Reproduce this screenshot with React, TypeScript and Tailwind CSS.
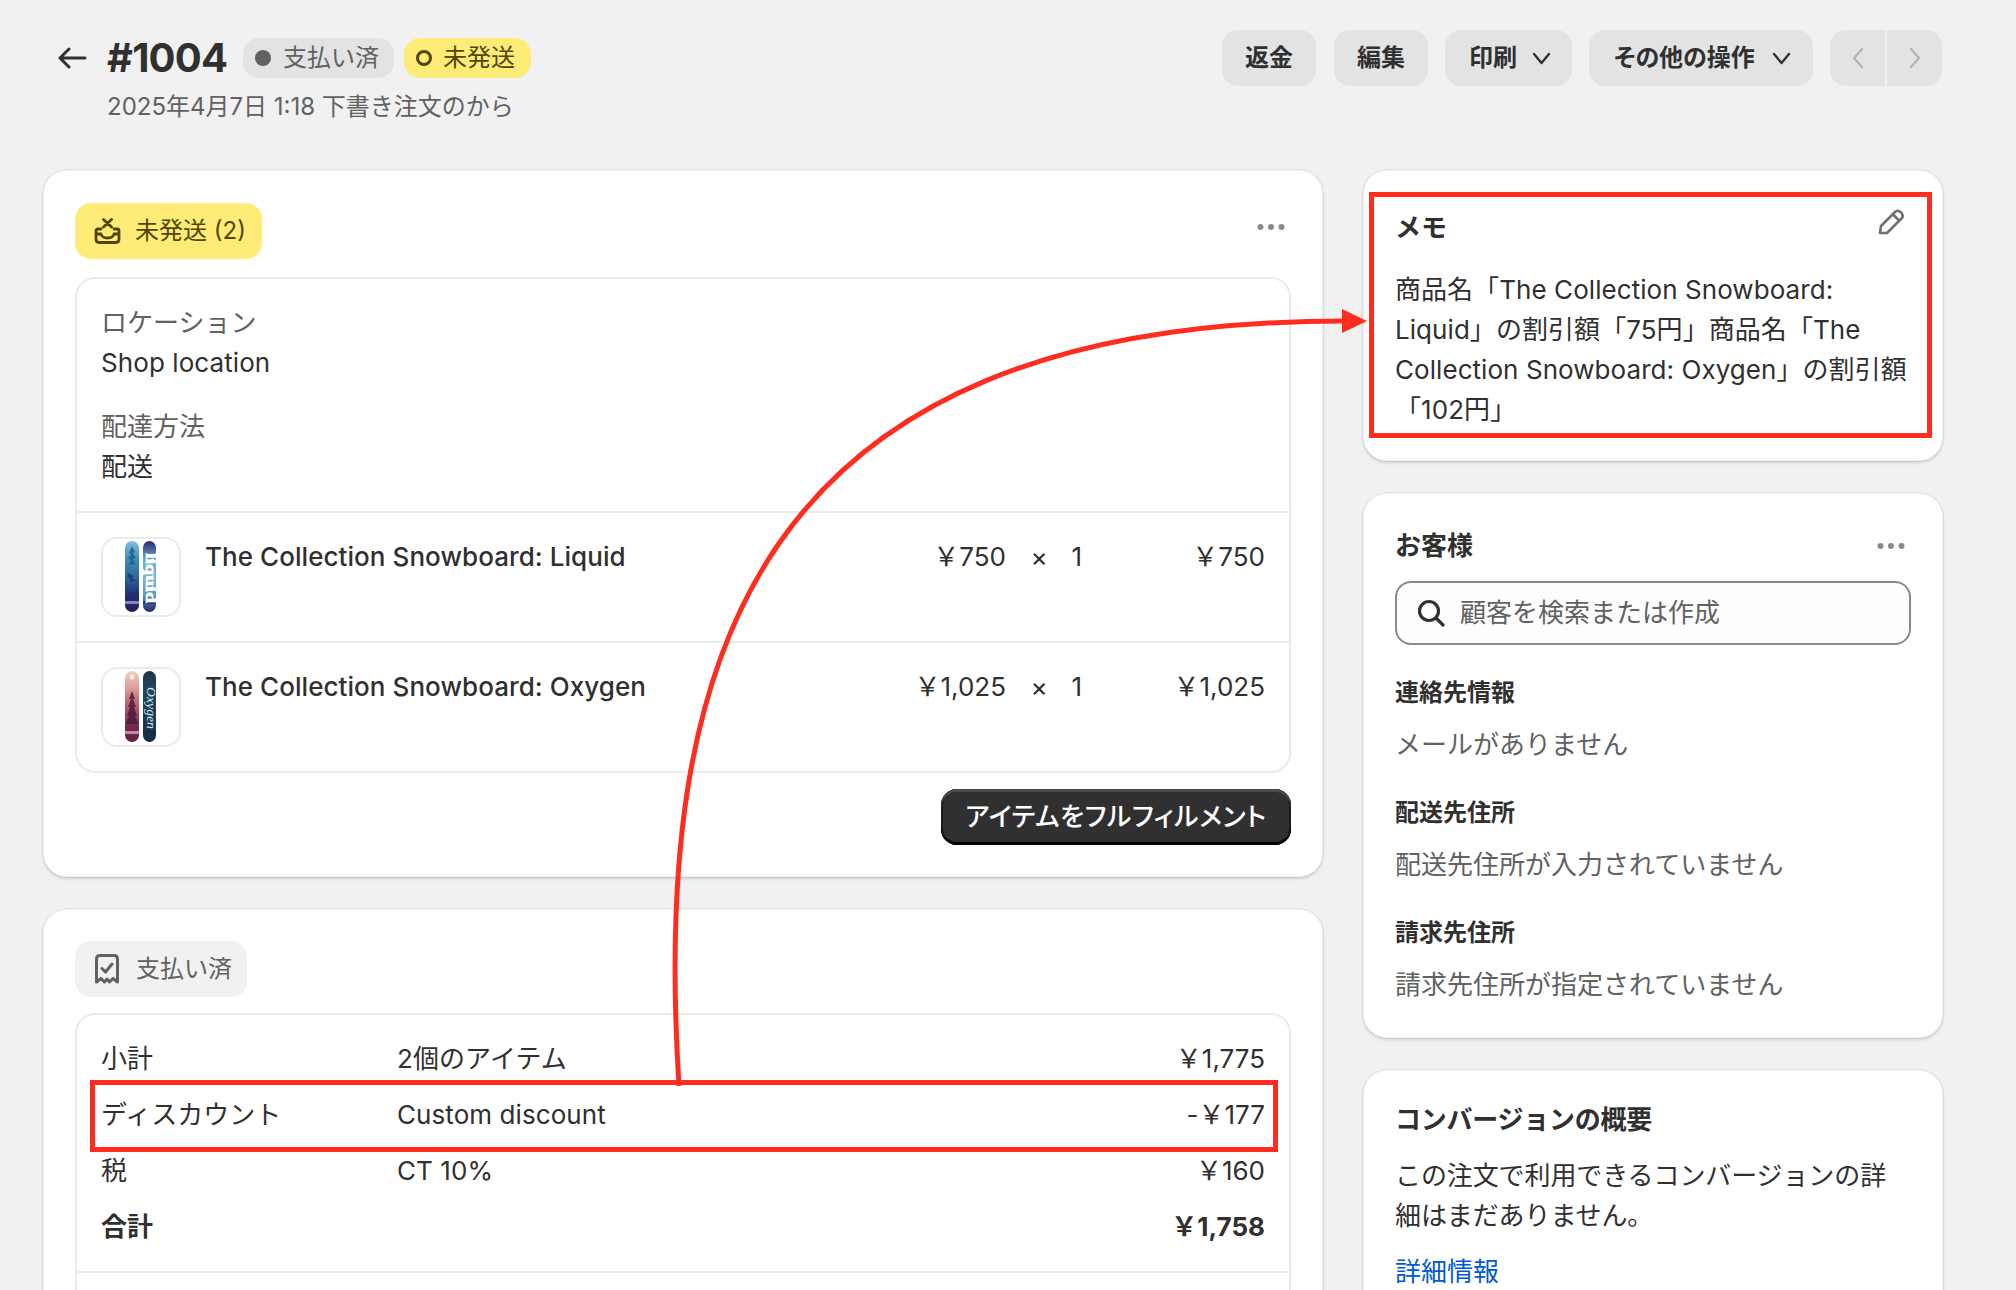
import type { ReactNode } from "react";

const RED = "#ff2d20";
const YEN = "\uFFE5";

function Chevron({ dir = "down", color = "#303030" }: { dir?: "down" | "left" | "right"; color?: string }) {
  const d = dir === "down" ? "M2 2l7.5 9L17 2" : dir === "left" ? "M11 2L3 11l8 9" : "M3 2l8 9-8 9";
  const size = dir === "down" ? "h-[13px] w-[19px]" : "h-[22px] w-[14px]";
  return (
    <svg className={size} viewBox={dir === "down" ? "0 0 19 13" : "0 0 14 22"} fill="none" stroke={color} strokeWidth="2.4" strokeLinecap="round" strokeLinejoin="round">
      <path d={d} />
    </svg>
  );
}

function Dots() {
  return (
    <svg className="h-[8px] w-[28px]" viewBox="0 0 28 8" fill="#8a8a8a">
      <circle cx="3.5" cy="4" r="3" />
      <circle cx="14" cy="4" r="3" />
      <circle cx="24.5" cy="4" r="3" />
    </svg>
  );
}

function HeaderButton({ children, className }: { children: ReactNode; className: string }) {
  return (
    <button type="button" className={`flex h-[56px] items-center rounded-[16px] bg-[#e3e3e3] text-[24px] font-semibold text-[#303030] [font-feature-settings:'palt'] ${className}`}>
      {children}
    </button>
  );
}

function Board({ id, x, w, stops, band, children }: { id: string; x: number; w: number; stops: string[]; band: string; children?: ReactNode }) {
  return (
    <g>
      <defs>
        <linearGradient id={`${id}-g`} x1="0" y1="0" x2="0" y2="1">
          {stops.map((s, i) => (
            <stop key={s} offset={i / (stops.length - 1)} stopColor={s} />
          ))}
        </linearGradient>
        <clipPath id={`${id}-c`}>
          <rect x={x} y="4" width={w} height="71" rx={w / 2} />
        </clipPath>
      </defs>
      <g clipPath={`url(#${id}-c)`}>
        <rect x={x} y="4" width={w} height="71" fill={`url(#${id}-g)`} />
        <rect x={x} y="64" width={w} height="3" fill={band} opacity="0.75" />
        {children}
      </g>
    </g>
  );
}

function LiquidThumb() {
  return (
    <svg className="h-[76px] w-[76px]" viewBox="2 2 76 76">
      <Board id="lq1" x={24} w={14} stops={["#86c0da", "#3d8fb8", "#2b6a9e", "#252d78", "#1f1d5c"]} band="#a8a8c0">
        <path d="M31 9l3 6-2 1 3 5-3 1 2 5-6 1 2-5-3-1 3-5-2-1z" fill="#1d5a86" opacity="0.8" />
        <path d="M27 36l6 3-2 2 4 3-7 1 2-3-4-2z" fill="#1c3f78" />
      </Board>
      <Board id="lq2" x={42} w={13} stops={["#26296a", "#6aa9cc", "#7db8d4", "#5c9ac2", "#26296a"]} band="#26296a">
        <text x="0" y="0" transform="translate(45 16) rotate(90)" fontFamily="Liberation Serif" fontWeight="700" fontSize="15" fill="#ffffff" stroke="#ffffff" strokeWidth="0.6" textLength="50" lengthAdjust="spacingAndGlyphs">
          liquid
        </text>
      </Board>
    </svg>
  );
}

function OxygenThumb() {
  return (
    <svg className="h-[76px] w-[76px]" viewBox="2 2 76 76">
      <Board id="ox1" x={24} w={14} stops={["#ecd0c8", "#dc9a98", "#b85a68", "#7c2a50", "#63203f"]} band="#c8b4bc">
        <path d="M31 24l3 8-2 0 3 8-2 0 3 9-2 0 3 8H25l3-8-2 0 3-9-2 0 3-8-2 0z" fill="#4a1c3a" opacity="0.85" />
        <circle cx="31" cy="10" r="2.4" fill="#fbeee8" />
      </Board>
      <Board id="ox2" x={42} w={13} stops={["#1b3348", "#24465f", "#1d3e56", "#1a3850", "#142c42"]} band="#1a2c3e">
        <text x="0" y="0" transform="translate(46 20) rotate(90)" fontFamily="Liberation Serif" fontStyle="italic" fontSize="13" fill="#dcecf0" textLength="42" lengthAdjust="spacingAndGlyphs">
          Oxygen
        </text>
      </Board>
    </svg>
  );
}

function ProductRow({ name, price, thumb }: { name: string; price: string; thumb: ReactNode }) {
  return (
    <div className="flex h-[130px] border-t-2 border-[#ebebeb] px-[24px] py-[24px]">
      <div className="flex h-[80px] w-[80px] shrink-0 items-center justify-center rounded-[16px] border-2 border-[#ebebeb] bg-white">{thumb}</div>
      <div className="ml-[24px] flex-1 font-medium tracking-[0.06px] whitespace-nowrap">{name}</div>
      <div className="w-[160px] text-right">{price}</div>
      <div className="ml-[10px] w-[46px] text-center">×</div>
      <div className="w-[20px] text-right">1</div>
      <div className="w-[183px] text-right">{price}</div>
    </div>
  );
}

function SummaryRow({ label, detail, value, bold }: { label: string; detail?: string; value: string; bold?: boolean }) {
  return (
    <div className={`flex ${bold ? "font-bold" : ""}`}>
      <div className="w-[296px]">{label}</div>
      <div className="flex-1 tracking-[0.08px]">{detail}</div>
      <div>{value}</div>
    </div>
  );
}

function Card({ className = "", children }: { className?: string; children: ReactNode }) {
  return (
    <section className={`rounded-[24px] bg-white shadow-[0_2px_3px_rgba(26,26,26,0.14),0_0_0_1px_rgba(26,26,26,0.06),inset_0_0_0_1px_rgba(26,26,26,0.06)] ${className}`}>{children}</section>
  );
}

function AddressBlock({ title, body }: { title: string; body: string }) {
  return (
    <div className="mt-[28px]">
      <div className="text-[24px] font-semibold">{title}</div>
      <div className="mt-[12px] text-[#616161]">{body}</div>
    </div>
  );
}

function Annotation() {
  return (
    <svg className="pointer-events-none absolute inset-0 h-[1290px] w-[2016px]" viewBox="0 0 2016 1290" fill="none">
      <rect x="1371.5" y="194.5" width="558" height="241" stroke={RED} strokeWidth="5" />
      <rect x="92.5" y="1082.5" width="1183" height="67" stroke={RED} strokeWidth="5" />
      <path d="M679 1086C652 660 750 321 1345 321" stroke={RED} strokeWidth="5" />
      <path d="M1342 309L1367 321L1342 333Z" fill={RED} />
    </svg>
  );
}

export default function App() {
  return (
    <div className="relative h-[1290px] w-[2016px] overflow-hidden bg-[#f1f1f1] font-['Inter','Noto_Sans_CJK_JP',sans-serif] text-[26px] leading-[40px] text-[#303030]">
      <div className="pr-[73px] pl-[43px]">
        <header className="flex h-[170px] items-start justify-between pt-[30px]">
          <div className="flex items-start pl-[14px]">
            <div className="flex h-[56px] w-[50px] items-center">
              <svg className="h-[22px] w-[30px]" viewBox="0 0 30 22" fill="none" stroke="#303030" strokeWidth="3" strokeLinecap="round" strokeLinejoin="round">
                <path d="M28 11H3M12 2l-9 9 9 9" />
              </svg>
            </div>
            <div>
              <div className="flex h-[56px] items-center">
                <h1 className="w-[136px] text-[40px] font-bold tracking-[-0.8px]">#1004</h1>
                <span className="flex h-[40px] w-[151px] items-center gap-[12px] rounded-[16px] bg-[#e3e3e3] pl-[12px] text-[24px] text-[#616161]">
                  <span className="h-[16px] w-[16px] rounded-full bg-[#616161]" />
                  支払い済
                </span>
                <span className="ml-[10px] flex h-[40px] w-[127px] items-center gap-[11px] rounded-[16px] bg-[#ffeb78] pl-[12px] text-[24px] text-[#4f4700]">
                  <span className="h-[16px] w-[16px] rounded-full border-[3px] border-[#4f4700]" />
                  未発送
                </span>
              </div>
              <p className="mt-[1px] text-[24px] text-[#616161]">2025年4月7日 1:18 下書き注文のから</p>
            </div>
          </div>
          <div className="flex gap-[17px] pr-[1px]">
            <HeaderButton className="mr-[1px] w-[94px] justify-center">返金</HeaderButton>
            <HeaderButton className="w-[94px] justify-center">編集</HeaderButton>
            <HeaderButton className="w-[127px] justify-between pr-[21px] pl-[24px]">
              印刷
              <Chevron />
            </HeaderButton>
            <HeaderButton className="w-[224px] justify-between pr-[22px] pl-[25px]">
              その他の操作
              <Chevron />
            </HeaderButton>
            <div className="flex h-[56px] w-[112px] overflow-hidden rounded-[16px] bg-[#e3e3e3]">
              <div className="flex flex-1 items-center justify-center border-r-2 border-[#f1f1f1]">
                <Chevron dir="left" color="#b5b5b5" />
              </div>
              <div className="flex flex-1 items-center justify-center">
                <Chevron dir="right" color="#b5b5b5" />
              </div>
            </div>
          </div>
        </header>

        <main className="grid grid-cols-[1280px_580px] gap-[40px]">
          <div className="flex flex-col gap-[32px]">
            <Card className="px-[32px] pt-[33px] pb-[32px]">
              <div className="flex items-start justify-between pr-[6px]">
                <span className="flex h-[56px] w-[187px] items-center gap-[14px] rounded-[16px] bg-[#ffeb78] pl-[19px] text-[24px] text-[#4f4700]">
                  <svg className="h-[26px] w-[27px]" viewBox="0 0 27 26" fill="none" stroke="#4f4700" strokeWidth="2.8" strokeLinecap="round" strokeLinejoin="round">
                    <path d="M9.5 1.5l8 7.5M17.5 1.5l-8 7.5M7 11H4Q2 11 2 13V21Q2 24.5 5 24.5H22Q25 24.5 25 21V13Q25 11 23 11H20M2 16H7Q8 20 13.5 20T20 16H25" />
                  </svg>
                  未発送 (2)
                </span>
                <div className="mt-[20px]">
                  <Dots />
                </div>
              </div>
              <div className="mt-[18px] rounded-[20px] border-2 border-[#ebebeb]">
                <div className="p-[24px]">
                  <div className="text-[#616161]">ロケーション</div>
                  <div className="tracking-[0.08px]">Shop location</div>
                  <div className="mt-[24px] text-[#616161]">配達方法</div>
                  <div>配送</div>
                </div>
                <ProductRow name="The Collection Snowboard: Liquid" price={`${YEN}750`} thumb={<LiquidThumb />} />
                <ProductRow name="The Collection Snowboard: Oxygen" price={`${YEN}1,025`} thumb={<OxygenThumb />} />
              </div>
              <div className="mt-[16px] flex justify-end">
                <button
                  type="button"
                  className="flex h-[56px] w-[350px] items-center justify-center rounded-[16px] bg-[#303030] text-[26px] font-medium tracking-[0.6px] text-white [font-feature-settings:'palt'] shadow-[inset_0_-3px_0_#000000,inset_0_3px_0_#4a4a4a,inset_2px_0_0_#1a1a1a,inset_-2px_0_0_#1a1a1a]"
                >
                  アイテムをフルフィルメント
                </button>
              </div>
            </Card>

            <Card className="px-[32px] pt-[32px] pb-[32px]">
              <span className="flex h-[56px] w-[172px] items-center gap-[17px] rounded-[16px] bg-[#f1f1f1] pl-[20px] text-[24px] text-[#616161]">
                <svg className="h-[30px] w-[24px]" viewBox="0 0 24 30" fill="none" stroke="#616161" strokeWidth="3" strokeLinecap="round" strokeLinejoin="round">
                  <path d="M1.5 28V5Q1.5 1.5 5 1.5H19Q22.5 1.5 22.5 5V28L18 24.5 14.5 28 12 25 9.5 28 6 24.5ZM7 14.5L10.5 18 17 10" />
                </svg>
                支払い済
              </span>
              <div className="mt-[16px] rounded-[20px] border-2 border-[#ebebeb]">
                <div className="flex flex-col gap-[16px] border-b-2 border-[#ebebeb] p-[24px]">
                  <SummaryRow label="小計" detail="2個のアイテム" value={`${YEN}1,775`} />
                  <SummaryRow label="ディスカウント" detail="Custom discount" value={`-${YEN}177`} />
                  <SummaryRow label="税" detail="CT 10%" value={`${YEN}160`} />
                  <SummaryRow label="合計" value={`${YEN}1,758`} bold />
                </div>
                <div className="h-[100px]" />
              </div>
            </Card>
          </div>

          <aside className="flex flex-col gap-[32px]">
            <Card className="px-[32px] pt-[38px] pb-[31px]">
              <div className="flex items-start justify-between">
                <h2 className="font-semibold">メモ</h2>
                <svg className="mr-[6px] h-[28px] w-[28px]" viewBox="0 0 28 28" fill="none" stroke="#707070" strokeWidth="2.6" strokeLinejoin="round">
                  <path d="M3 25L4 18 18 4Q20.5 1.5 23.5 4L24.5 5Q27 8 24.5 10.5L10 25ZM16 6.5L22 12.5" />
                </svg>
              </div>
              <p className="mt-[22px] tracking-[0.06px]">商品名「The Collection Snowboard: Liquid」の割引額「75円」商品名「The Collection Snowboard: Oxygen」の割引額「102円」</p>
            </Card>

            <Card className="px-[32px] pt-[33px] pb-[33px]">
              <div className="flex items-center justify-between">
                <h2 className="font-semibold">お客様</h2>
                <div className="mr-[6px]">
                  <Dots />
                </div>
              </div>
              <div className="mt-[15px] flex h-[64px] items-center gap-[15px] rounded-[16px] border-2 border-[#8a8a8a] bg-[#fdfdfd] pl-[20px] text-[#616161]">
                <svg className="h-[28px] w-[28px]" viewBox="0 0 28 28" fill="none" stroke="#303030" strokeWidth="3.2" strokeLinecap="round">
                  <circle cx="12" cy="12" r="9.5" />
                  <path d="M19 19l7 7" />
                </svg>
                顧客を検索または作成
              </div>
              <AddressBlock title="連絡先情報" body="メールがありません" />
              <AddressBlock title="配送先住所" body="配送先住所が入力されていません" />
              <AddressBlock title="請求先住所" body="請求先住所が指定されていません" />
            </Card>

            <Card className="px-[32px] pt-[30px] pb-[32px]">
              <h2 className="font-semibold tracking-[-0.25px]">コンバージョンの概要</h2>
              <p className="mt-[16px] tracking-[-0.1px]">この注文で利用できるコンバージョンの詳細はまだありません。</p>
              <a className="mt-[16px] block text-[#005bd3]" href="#details">
                詳細情報
              </a>
            </Card>
          </aside>
        </main>
      </div>
      <Annotation />
    </div>
  );
}
